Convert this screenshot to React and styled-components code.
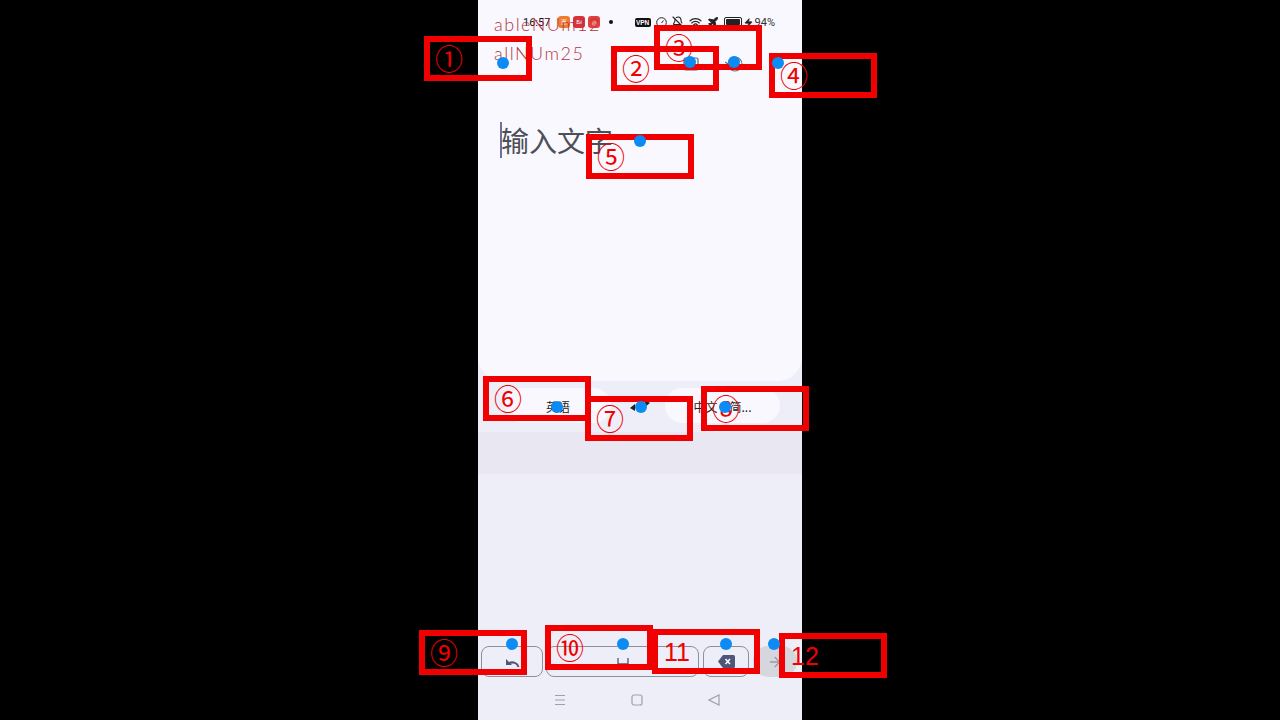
import React from "react";
import styled, { createGlobalStyle } from "styled-components";
import { BellOff, Plane, Wifi, Zap, ArrowRight } from "lucide-react";

const Global = createGlobalStyle`
  html, body { margin: 0; padding: 0; background: #000; }
  body { font-family: "Noto Sans CJK SC", "Liberation Sans", sans-serif; }
`;

const Page = styled.div`
  position: relative;
  width: 1280px;
  height: 720px;
  overflow: hidden;
  background: #000;
  display: flex;
  justify-content: center;
`;

const Phone = styled.div`
  position: relative;
  width: 324px;
  height: 720px;
  display: flex;
  flex-direction: column;
  background: #eeeef8;
`;

const EditorCard = styled.div`
  height: 381px;
  flex-shrink: 0;
  background: #f9f8fe;
  border-radius: 0 0 24px 24px;
  display: flex;
  flex-direction: column;
`;

const StatusBar = styled.div`
  height: 14px;
  margin-top: 15px;
  padding: 0 27px 0 45px;
  display: flex;
  align-items: center;
  justify-content: space-between;
  color: #222;
`;

const StatusGroup = styled.div`
  display: flex;
  align-items: center;
  gap: ${(p) => p.$gap || 3}px;
`;

const Time = styled.span`
  width: 30px;
  margin-right: 2px;
  font: 11px "Roboto", sans-serif;
  color: #111;
`;

const AppBadge = styled.span`
  width: 12px;
  height: 12px;
  border-radius: 3px;
  background: ${(p) => p.$color};
  display: flex;
  align-items: center;
  justify-content: center;
  color: #fff;
  font: 6px "Liberation Sans", sans-serif;
`;

const Bullet = styled.span`
  width: 4px;
  height: 4px;
  margin-left: 6px;
  border-radius: 50%;
  background: #111;
`;

const VpnBadge = styled.span`
  width: 16px;
  height: 9px;
  border-radius: 2px;
  background: #111;
  color: #fff;
  font: bold 6.5px/9px "Liberation Sans", sans-serif;
  text-align: center;
`;

const Percent = styled.span`
  font: 11px "Roboto", sans-serif;
  color: #333;
`;

const Battery = styled.span`
  width: 18px;
  height: 10px;
  box-sizing: border-box;
  border: 1px solid #222;
  border-radius: 2px;
  padding: 1px;
  display: flex;
  &::before {
    content: "";
    flex: 1;
    background: #222;
    border-radius: 1px;
  }
`;

const DebugLines = styled.div`
  position: absolute;
  left: 16px;
  top: 14px;
  display: flex;
  flex-direction: column;
  gap: 9px;
`;

const DebugLine = styled.span`
  font: 300 18px/20px "Lato", sans-serif;
  letter-spacing: 1.5px;
  color: #b5343e;
`;

const Toolbar = styled.div`
  height: 16px;
  margin-top: 27px;
  padding-right: 59px;
  display: flex;
  align-items: center;
  justify-content: flex-end;
  gap: 26px;
`;

const Editor = styled.div`
  margin: 50px 0 0 22px;
  height: 36px;
  display: flex;
  align-items: center;
`;

const Caret = styled.span`
  width: 2px;
  height: 36px;
  background: #6c6f9a;
`;

const Placeholder = styled.span`
  margin-left: -1px;
  font-size: 28px;
  line-height: 36px;
  color: #4c4e58;
`;

const LangBar = styled.div`
  height: 51px;
  flex-shrink: 0;
  padding: 7px 22px 9px 27px;
  box-sizing: border-box;
  display: flex;
  align-items: center;
  justify-content: space-between;
`;

const LangPill = styled.div`
  width: ${(p) => p.$width}px;
  height: 35px;
  box-sizing: border-box;
  padding-top: 2px;
  border-radius: 18px;
  background: #f9f8fe;
  font-size: 12px;
  color: #222;
  display: flex;
  align-items: center;
  justify-content: center;
`;

const SwapSlot = styled.span`
  margin-left: 4px;
  display: flex;
`;

const Strip = styled.div`
  height: 42px;
  flex-shrink: 0;
  background: #e9e8f2;
`;

const Keyboard = styled.div`
  flex: 1;
  display: flex;
  flex-direction: column;
  justify-content: flex-end;
`;

const KeyRow = styled.div`
  display: flex;
  align-items: center;
  gap: 3px;
  padding-left: 3px;
`;

const Key = styled.div`
  width: ${(p) => p.$width}px;
  height: 31px;
  margin-right: ${(p) => p.$after || 0}px;
  box-sizing: border-box;
  border: 1px solid #8f8f9c;
  border-radius: 8px;
  display: flex;
  align-items: center;
  justify-content: center;
`;

const SendKey = styled.div`
  width: 44px;
  height: 31px;
  margin-left: 1px;
  border-radius: 16px;
  background: #d6d6df;
  display: flex;
  align-items: center;
  justify-content: center;
  color: #9a9aa6;
`;

const NavBar = styled.div`
  height: 43px;
  box-sizing: border-box;
  padding: 3px 82px 0 76px;
  display: flex;
  align-items: center;
  justify-content: space-between;
  color: #a0a0aa;
`;

const Overlay = styled.div`
  position: absolute;
  inset: 0;
  pointer-events: none;
`;

const Marker = styled.div`
  position: absolute;
  left: ${(p) => p.$x}px;
  top: ${(p) => p.$y}px;
  width: 108px;
  height: 45px;
  box-sizing: border-box;
  border: 6px solid #f00000;
  color: #f00000;
  font-size: ${(p) => (p.$plain ? 25 : 28)}px;
  font-family: ${(p) => (p.$plain ? '"Liberation Sans"' : '"Noto Sans CJK SC"')}, sans-serif;
  line-height: ${(p) => (p.$plain ? 35 : 33)}px;
  padding-left: ${(p) => (p.$plain ? 6 : 5)}px;
`;

const Dot = styled.span`
  position: absolute;
  left: ${(p) => p.$x - 6}px;
  top: ${(p) => p.$y - 6}px;
  width: 12px;
  height: 12px;
  border-radius: 50%;
  background: #0d8bf5;
`;

const markers = [
  ["①", 424, 36], ["②", 611, 46], ["③", 654, 25], ["④", 769, 53],
  ["⑤", 586, 134], ["⑥", 483, 376], ["⑦", 585, 396], ["⑧", 701, 386],
  ["⑨", 419, 630], ["⑩", 545, 625], ["11", 652, 629], ["12", 779, 633],
];

const dots = [
  [503, 63], [690, 62], [734, 62], [778, 63], [640, 141], [557, 407],
  [641, 407], [725, 407], [512, 644], [623, 644], [726, 644], [774, 644],
];

const SwapIcon = () => (
  <svg width="20" height="11" viewBox="0 0 20 11" fill="#222">
    <path d="M0 8l5-4v7zM20 3l-5-3v7z" />
  </svg>
);

const UndoIcon = () => (
  <svg width="16" height="12" viewBox="0 0 16 12" fill="none" stroke="#50557a" strokeWidth="2">
    <path d="M14.5 11c-1-4-5.500-6-10-3.500" />
    <path d="M2 3v6h6" fill="#50557a" stroke="none" />
  </svg>
);

const SpaceIcon = () => (
  <svg width="12" height="7" viewBox="0 0 12 7" fill="none" stroke="#50557a" strokeWidth="1.300">
    <path d="M1 0v6h10V0" />
  </svg>
);

const BackspaceIcon = () => (
  <svg width="17" height="13" viewBox="0 0 17 13">
    <path d="M5 0h10.500a1.500 1.500 0 0 1 1.500 1.500v10a1.500 1.500 0 0 1-1.500 1.500H5L0 6.500z" fill="#50557a" />
    <path d="M7.500 4l4.500 5M12 4l-4.500 5" stroke="#fff" strokeWidth="1.500" />
  </svg>
);

const RectIcon = () => (
  <svg width="16" height="14" viewBox="0 0 16 14" fill="none" stroke="#5f6379" strokeWidth="1.200">
    <rect x="1" y="1" width="14" height="12" rx="1.500" />
  </svg>
);

const CircleIcon = () => (
  <svg width="18" height="16" viewBox="0 0 18 16" fill="none" stroke="#6a6e85" strokeWidth="1.100">
    <circle cx="10" cy="8" r="7" />
    <path d="M3 8L0 6" />
  </svg>
);

const ClockIcon = () => (
  <svg width="11" height="11" viewBox="0 0 11 11" fill="none" stroke="#222" strokeWidth="1">
    <circle cx="5.500" cy="5.500" r="4.800" />
    <path d="M5.500 6l2-2.500" />
  </svg>
);

const MenuIcon = () => (
  <svg width="12" height="12" viewBox="0 0 12 12" stroke="currentColor" strokeWidth="1.200">
    <path d="M1 1.500h10M1 6h10M1 10.500h10" />
  </svg>
);

const SquareIcon = () => (
  <svg width="12" height="12" viewBox="0 0 12 12" fill="none" stroke="currentColor" strokeWidth="1.200">
    <rect x="1" y="1" width="10" height="10" rx="2" />
  </svg>
);

const BackIcon = () => (
  <svg width="12" height="12" viewBox="0 0 12 12" fill="none" stroke="currentColor" strokeWidth="1.200">
    <path d="M11 1v10L1 6z" />
  </svg>
);

export default function App() {
  return (
    <>
      <Global />
      <Page>
        <Phone>
          <EditorCard>
            <StatusBar>
              <StatusGroup>
                <Time>16:57</Time>
                <AppBadge $color="#ef7b2f">惠</AppBadge>
                <AppBadge $color="#d9323c">BI</AppBadge>
                <AppBadge $color="#e2403c">◎</AppBadge>
                <Bullet />
              </StatusGroup>
              <StatusGroup $gap={2}>
                <StatusGroup $gap={5}>
                  <VpnBadge>VPN</VpnBadge>
                  <ClockIcon />
                  <BellOff size={12} strokeWidth={2.200} />
                  <Wifi size={13} strokeWidth={2.200} />
                  <Plane size={12} fill="#222" />
                  <Battery />
                </StatusGroup>
                <Zap size={9} fill="#222" />
                <Percent>94%</Percent>
              </StatusGroup>
            </StatusBar>
            <DebugLines>
              <DebugLine>ableNUm12</DebugLine>
              <DebugLine>allNUm25</DebugLine>
            </DebugLines>
            <Toolbar>
              <RectIcon />
              <CircleIcon />
            </Toolbar>
            <Editor>
              <Caret />
              <Placeholder>输入文字</Placeholder>
            </Editor>
          </EditorCard>
          <LangBar>
            <LangPill $width={106}>英语</LangPill>
            <SwapSlot>
              <SwapIcon />
            </SwapSlot>
            <LangPill $width={115}>中文（简...</LangPill>
          </LangBar>
          <Strip />
          <Keyboard>
            <KeyRow>
              <Key $width={62}>
                <UndoIcon />
              </Key>
              <Key $width={153} $after={1}>
                <SpaceIcon />
              </Key>
              <Key $width={46}>
                <BackspaceIcon />
              </Key>
              <SendKey>
                <ArrowRight size={16} />
              </SendKey>
            </KeyRow>
            <NavBar>
              <MenuIcon />
              <SquareIcon />
              <BackIcon />
            </NavBar>
          </Keyboard>
        </Phone>
        <Overlay>
          {markers.map(([label, x, y]) => (
            <Marker key={label} $x={x} $y={y} $plain={label.length > 1}>
              {label}
            </Marker>
          ))}
          {dots.map(([x, y]) => (
            <Dot key={`${x}-${y}`} $x={x} $y={y} />
          ))}
        </Overlay>
      </Page>
    </>
  );
}
